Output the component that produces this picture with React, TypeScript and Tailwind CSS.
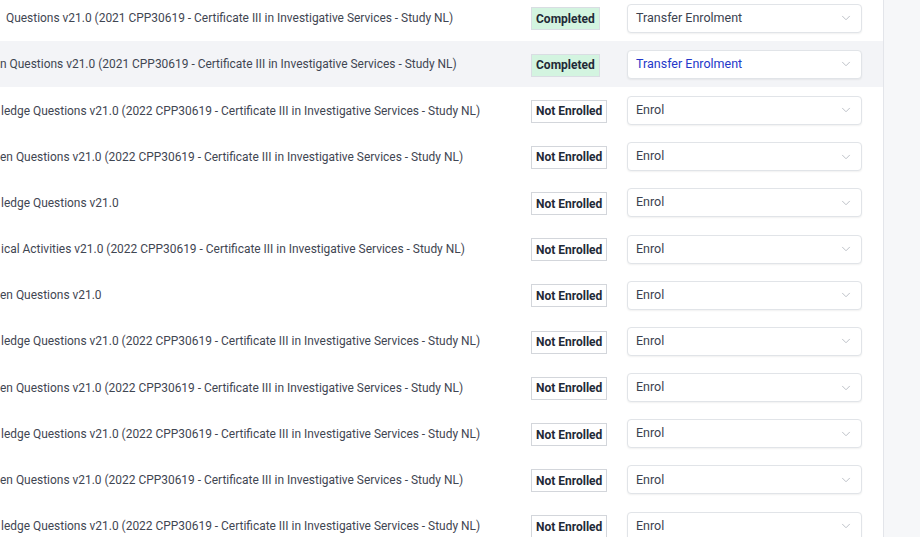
import { ChevronDown } from 'lucide-react'

type Row = {
  title: string
  status: 'Completed' | 'Not Enrolled'
  action: string
  indent: string
  active?: boolean
}

const tail21 = ' v21.0 (2021 CPP30619 - Certificate III in Investigative Services - Study NL)'
const tail22 = ' v21.0 (2022 CPP30619 - Certificate III in Investigative Services - Study NL)'

const rows: Row[] = [
  { title: ' Questions' + tail21, status: 'Completed', action: 'Transfer Enrolment', indent: 'pl-[3px]' },
  { title: 'n Questions' + tail21, status: 'Completed', action: 'Transfer Enrolment', indent: 'pl-0', active: true },
  { title: 'ledge Questions' + tail22, status: 'Not Enrolled', action: 'Enrol', indent: 'pl-px' },
  { title: 'en Questions' + tail22, status: 'Not Enrolled', action: 'Enrol', indent: 'pl-0' },
  { title: 'ledge Questions v21.0', status: 'Not Enrolled', action: 'Enrol', indent: 'pl-px' },
  { title: 'ical Activities' + tail22, status: 'Not Enrolled', action: 'Enrol', indent: 'pl-px' },
  { title: 'en Questions v21.0', status: 'Not Enrolled', action: 'Enrol', indent: 'pl-0' },
  { title: 'ledge Questions' + tail22, status: 'Not Enrolled', action: 'Enrol', indent: 'pl-px' },
  { title: 'en Questions' + tail22, status: 'Not Enrolled', action: 'Enrol', indent: 'pl-0' },
  { title: 'ledge Questions' + tail22, status: 'Not Enrolled', action: 'Enrol', indent: 'pl-px' },
  { title: 'en Questions' + tail22, status: 'Not Enrolled', action: 'Enrol', indent: 'pl-0' },
  { title: 'ledge Questions' + tail22, status: 'Not Enrolled', action: 'Enrol', indent: 'pl-px' },
]

function StatusBadge({ status }: { status: Row['status'] }) {
  const done = status === 'Completed'
  return (
    <span
      className={
        done
          ? 'inline-flex h-[23px] items-center border border-[#d9dde3] bg-[#d3f4e0] px-[4px] text-[12px] font-bold text-[#1f2a37]'
          : 'inline-flex h-[23px] items-center border border-[#d3d6db] bg-white px-[4px] text-[12px] font-bold text-[#1f2a37]'
      }
    >
      {status}
    </span>
  )
}

function ActionSelect({ label, active }: { label: string; active?: boolean }) {
  return (
    <div className="flex h-[29px] w-[235px] items-center justify-between rounded-[4px] border border-[#e1e4e8] bg-white pl-[8px] pr-[8px] shadow-[0_1px_2px_rgba(0,0,0,0.06)]">
      <span className={active ? 'text-[12.5px] text-[#2438c9]' : 'text-[12.5px] text-[#3b4250]'}>{label}</span>
      <ChevronDown className="h-[14px] w-[14px] text-[#b3b8c0]" strokeWidth={1.5} />
    </div>
  )
}

export default function App() {
  return (
    <div className="flex h-[537px] w-[920px] overflow-hidden bg-white font-['Roboto',sans-serif]">
      <div className="w-[883px] shrink-0 overflow-hidden">
        <div className="-mt-[5px] flex flex-col">
          {rows.map((row, i) => (
            <div
              key={i}
              className={
                row.active
                  ? 'flex h-[46.2px] shrink-0 items-center bg-[#f3f4f7]'
                  : 'flex h-[46.2px] shrink-0 items-center'
              }
            >
              <div className={`mt-[2px] min-w-0 flex-1 overflow-hidden whitespace-pre text-[11.95px] text-[#3f4652] ${row.indent}`}>
                {row.title}
              </div>
              <div className="w-[96px] shrink-0">
                <StatusBadge status={row.status} />
              </div>
              <div className="w-[256px] shrink-0">
                <ActionSelect label={row.action} active={row.active} />
              </div>
            </div>
          ))}
        </div>
      </div>
      <div className="flex-1 border-l border-[#e3e5ea] bg-[#f6f7f9]" />
    </div>
  )
}
